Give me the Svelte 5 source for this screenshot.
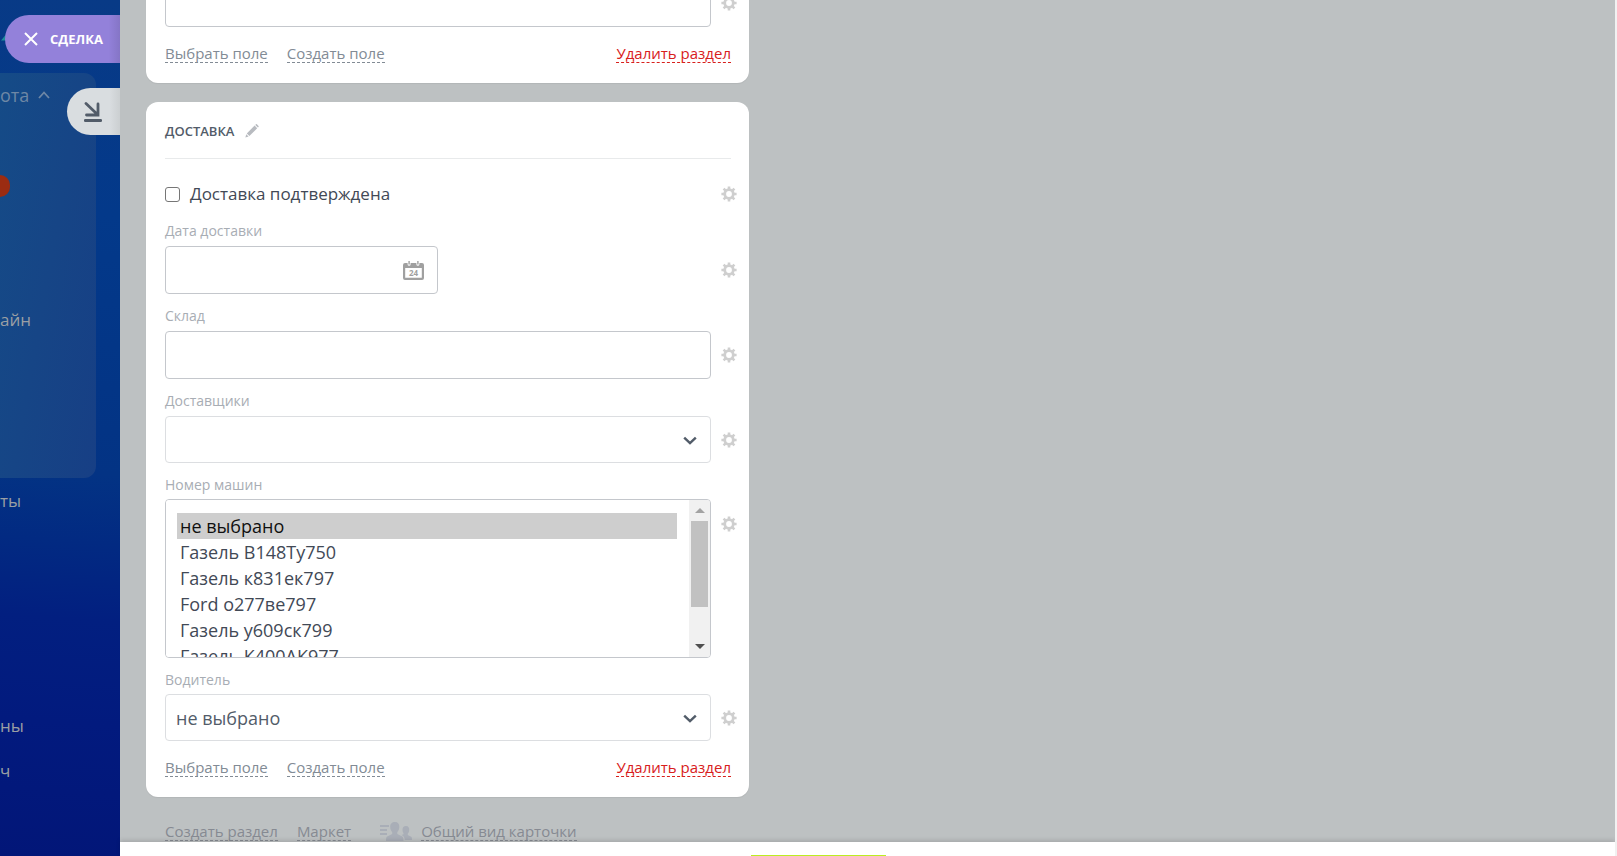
<script lang="ts">
	const trucks = [
		'не выбрано',
		'Газель В148Ту750',
		'Газель к831ек797',
		'Ford о277ве797',
		'Газель у609ск799',
		'Газель К400АК977',
		'Газель',
		'Ford',
		'Газель'
	];

	let lastField = $state('');
	let confirmed = $state(false);
	let date = $state('');
	let stock = $state('');
	let courier = $state('');
	let truck = $state(['не выбрано']);
	let driver = $state('не выбрано');
	let listEl: HTMLElement;

	function scrollList(delta: number) {
		listEl.scrollTop += delta;
	}
</script>

{#snippet gear()}
	<button class="gear" aria-label="Настройки поля">
		<svg width="16" height="16" viewBox="0 0 16 16">
			<circle cx="8" cy="8" r="4.3" fill="none" stroke="#cfcfcf" stroke-width="2.8" />
			<g stroke="#cfcfcf" stroke-width="2.6">
				<path d="M8 .4v2.8M8 12.8v2.8M.4 8h2.8M12.8 8h2.8" />
				<path d="M2.6 2.6l2 2M11.4 11.4l2 2M2.6 13.4l2-2M11.4 4.6l2-2" />
			</g>
		</svg>
	</button>
{/snippet}

{#snippet chevron()}
	<svg class="chevron" width="14" height="10" viewBox="0 0 14 10">
		<path d="M1.2 1.6 7 7.2l5.8-5.6" fill="none" stroke="#525c69" stroke-width="2.4" />
	</svg>
{/snippet}

{#snippet sectionLinks()}
	<div class="links">
		<a href="#select">Выбрать поле</a>
		<a href="#create">Создать поле</a>
		<a class="remove" href="#remove">Удалить раздел</a>
	</div>
{/snippet}

<div class="layout">
	<aside class="sidebar">
		<svg class="logo" width="8" height="12" viewBox="0 0 8 12">
			<path d="M1 9.5 8 1v8.5z" fill="#1d8f9b" />
		</svg>
		<nav class="menu">
			<div class="group">
				<a class="group-title" href="#work">
					ота
					<svg width="12" height="8" viewBox="0 0 12 8">
						<path d="M1 7l5-5.5L11 7" fill="none" stroke="currentColor" stroke-width="1.8" />
					</svg>
				</a>
				<span class="counter"></span>
				<a class="online" href="#online">айн</a>
			</div>
			<a class="item" href="#item-1">ты</a>
			<a class="item second" href="#item-2">ны</a>
			<a class="item third" href="#item-3">ч</a>
		</nav>
		<button class="tab deal">
			<svg width="14" height="14" viewBox="0 0 14 14">
				<path d="M1 1l12 12M13 1L1 13" stroke="#fff" stroke-width="2" />
			</svg>
			СДЕЛКА
		</button>
		<button class="tab minimize" aria-label="Свернуть">
			<svg width="18" height="20" viewBox="0 0 18 20">
				<path
					d="M2 1.5l11.5 11M14 2v11H2.5M1.3 18.5h15.4"
					fill="none"
					stroke="#525c69"
					stroke-width="2.8"
					stroke-linecap="round"
				/>
			</svg>
		</button>
	</aside>

	<main class="panel">
		<section class="card previous">
			<div class="row">
				<input class="control" type="text" aria-label="Поле" bind:value={lastField} />
				{@render gear()}
			</div>
			{@render sectionLinks()}
		</section>

		<section class="card">
			<header class="card-header">
				<h2>ДОСТАВКА</h2>
				<button class="edit" aria-label="Переименовать">
					<svg width="14" height="14" viewBox="0 0 14 14">
						<path d="M1.8 9.4 9.6 1.6l2.6 2.6L4.4 12zM10.3.9l.6-.6q.5-.4 1 0l1.6 1.6q.4.5 0 1l-.6.6zM1.2 10.2l2.4 2.4L.4 13.4z" fill="#b8bbc0" />
					</svg>
				</button>
			</header>

			<div class="row check-row">
				<label class="check">
					<input type="checkbox" bind:checked={confirmed} />
					Доставка подтверждена
				</label>
				{@render gear()}
			</div>

			<label class="label" for="date">Дата доставки</label>
			<div class="row">
				<div class="wrap date">
					<input class="control" id="date" type="text" bind:value={date} />
					<svg class="calendar" width="21" height="19" viewBox="0 0 21 19">
						<path d="M2 2h2.6v1.2a1.5 1.5 0 0 0 3 0V2h5.8v1.2a1.5 1.5 0 0 0 3 0V2H19a2 2 0 0 1 2 2v13a2 2 0 0 1-2 2H2a2 2 0 0 1-2-2V4a2 2 0 0 1 2-2zm.2 5v9.8h16.6V7z" fill="#a0a0a0" fill-rule="evenodd" />
						<path d="M6.1 0v3.4M14.9 0v3.4" stroke="#a0a0a0" stroke-width="1.4" />
						<text x="10.5" y="15" text-anchor="middle" font-size="8" font-weight="700" fill="#a0a0a0">24</text>
					</svg>
				</div>
				{@render gear()}
			</div>

			<label class="label" for="stock">Склад</label>
			<div class="row">
				<input class="control" id="stock" type="text" bind:value={stock} />
				{@render gear()}
			</div>

			<label class="label" for="courier">Доставщики</label>
			<div class="row">
				<div class="wrap">
					<select class="control drop" id="courier" bind:value={courier}>
						<option value=""></option>
					</select>
					{@render chevron()}
				</div>
				{@render gear()}
			</div>

			<label class="label tight" for="truck">Номер машин</label>
			<div class="row top">
				<div class="listbox">
					<select id="truck" multiple bind:this={listEl} bind:value={truck}>
						{#each trucks as name, i (i)}
							<option value={name}>{name}</option>
						{/each}
					</select>
					<div class="scroll">
						<button aria-label="Вверх" onclick={() => scrollList(-26)}>
							<svg width="10" height="5" viewBox="0 0 10 5"><path d="M0 5l5-5 5 5z" fill="#a3a3a3" /></svg>
						</button>
						<div class="thumb"></div>
						<button aria-label="Вниз" onclick={() => scrollList(26)}>
							<svg width="10" height="5" viewBox="0 0 10 5"><path d="M0 0l5 5 5-5z" fill="#505050" /></svg>
						</button>
					</div>
				</div>
				{@render gear()}
			</div>

			<label class="label tight" for="driver">Водитель</label>
			<div class="row">
				<div class="wrap">
					<select class="control drop" id="driver" bind:value={driver}>
						<option>не выбрано</option>
					</select>
					{@render chevron()}
				</div>
				{@render gear()}
			</div>

			{@render sectionLinks()}
		</section>

		<div class="links page-links">
			<a href="#section">Создать раздел</a>
			<a href="#market">Маркет</a>
			<span class="view">
				<svg width="32" height="20" viewBox="0 0 32 20" fill="#a9aeb7">
					<path d="M0 3h9v2H0zM0 7h7v2H0zM0 11h7v2H0z" />
					<path d="M15 0c3 0 4.5 2 4.3 5-.1 2.5-1 4-2 5v2l5 2.5c1 .6 1.2 2 1.2 4.5H6c0-2.5.2-4 1.2-4.5l5-2.5v-2c-1-1-2-2.5-2-5C10 2 12 0 15 0z" />
					<path d="M26 4c2.4 0 3.4 1.8 3.2 4-.1 1.8-.7 2.9-1.4 3.6v1.5l3.4 1.7c.7.5.8 1.7.8 3.2h-7.3c0-2-.6-3.3-2-4.2l-1.2-.7 2-.8v-1c-.7-.8-1-1.900-1-3.300C22.500 5.500 23.500 4 26 4z" />
				</svg>
				<a href="#view">Общий вид карточки</a>
			</span>
		</div>
	</main>

	<footer class="toolbar">
		<button class="save" aria-label="Сохранить"></button>
	</footer>
</div>

<style>
	:global(body) {
		overflow: hidden;
	}

	.layout {
		display: grid;
		grid-template-columns: 120px 1fr;
		grid-template-rows: minmax(0, 1fr) 14px;
		height: 100vh;
		overflow: hidden;
		box-sizing: border-box;
		border-right: 2px solid #f1f1f1;
		font-family: 'Open Sans', 'Noto Sans', sans-serif;
		font-size: 16px;
	}

	.layout * {
		box-sizing: border-box;
	}

	button {
		padding: 0;
		border: 0;
		background: none;
		font-family: inherit;
		cursor: pointer;
	}

	svg {
		display: block;
		flex: none;
	}

	.sidebar {
		grid-row: 1 / 3;
		position: relative;
		overflow: hidden;
		background: linear-gradient(184deg, #083a86 0%, #03398a 25%, #033384 55%, #022a82 63%, #021f80 72%, #021a7e 84%, #021678 100%);
	}

	.logo {
		position: absolute;
		top: 31px;
		left: 0;
	}

	.menu {
		display: flex;
		flex-direction: column;
		padding-top: 73px;
		font-size: 17px;
		line-height: 24px;
	}

	.menu a {
		color: #9a9fa4;
		text-decoration: none;
	}

	.group {
		display: flex;
		flex-direction: column;
		align-items: flex-start;
		width: 96px;
		height: 405px;
		padding-top: 10px;
		border-radius: 0 12px 12px 0;
		background: linear-gradient(100deg, #154b87, #173f85);
	}

	.group .group-title {
		display: flex;
		align-items: center;
		gap: 9px;
		color: #6e87a5;
		font-size: 18px;
	}

	.counter {
		width: 10px;
		height: 22px;
		margin-top: 68px;
		border-radius: 0 11px 11px 0;
		background: #9b2c12;
	}

	.online {
		margin-top: 111px;
	}

	.item {
		margin-top: 11px;
	}

	.item.second {
		margin-top: 201px;
	}

	.item.third {
		margin-top: 21px;
	}

	/* slider tabs float over the menu */
	.tab {
		position: absolute;
		right: 0;
		display: flex;
		align-items: center;
	}

	.deal {
		top: 15px;
		width: 115px;
		height: 48px;
		padding-left: 19px;
		gap: 12px;
		border-radius: 24px 0 0 24px;
		background: linear-gradient(90deg, #9381da 90%, #8575c6);
		color: #fff;
		font-size: 13px;
		font-weight: 700;
	}

	.minimize {
		top: 88px;
		width: 53px;
		height: 47px;
		padding-left: 17px;
		border-radius: 24px 0 0 24px;
		background: linear-gradient(90deg, #d9dde0 80%, #cbcfd1);
	}

	.panel {
		overflow: hidden;
		padding: 0 26px;
		background: #bdc1c2;
	}

	.card {
		width: 603px;
		max-width: 100%;
		margin-bottom: 19px;
		padding: 0 18px 20px 19px;
		border-radius: 12px;
		background: #fff;
		box-shadow: 0 1px 1px rgba(0, 0, 0, 0.06);
	}

	.card.previous {
		margin-top: -21px;
	}

	.card-header {
		display: flex;
		align-items: center;
		gap: 11px;
		height: 57px;
		margin-bottom: 21px;
		padding-top: 2px;
		border-bottom: 1px solid #e8eaeb;
	}

	h2 {
		margin: 0;
		color: #525c69;
		font-size: 13px;
		font-weight: 600;
	}

	.row {
		display: flex;
		align-items: center;
		justify-content: space-between;
		gap: 10px;
		margin-right: -6px;
	}

	.row.top {
		align-items: flex-start;
	}

	.row.top .gear {
		margin-top: 17px;
	}

	.check-row {
		height: 28px;
		margin-bottom: 1px;
	}

	.gear {
		flex: none;
		width: 16px;
		height: 16px;
	}

	.check {
		display: flex;
		align-items: center;
		gap: 10px;
		color: #424956;
		font-size: 17px;
		line-height: 24px;
	}

	.check input {
		appearance: none;
		width: 15px;
		height: 15px;
		margin: 0;
		border: 1px solid #767676;
		border-radius: 3px;
		background: #fff;
	}

	.check input:checked {
		background: #525c69;
	}

	.label {
		display: block;
		height: 37px;
		padding-top: 12px;
		color: #a8adb4;
		font-size: 14px;
		line-height: 20px;
	}

	.label.tight {
		height: 36px;
	}

	.control {
		display: block;
		width: 100%;
		height: 48px;
		margin: 0;
		padding: 0 10px;
		border: 1px solid #c4c7cc;
		border-radius: 4px;
		background: #fff;
		color: #525c69;
		font-family: inherit;
		font-size: 18px;
	}

	.drop {
		appearance: none;
		height: 47px;
		border-color: #dcdee1;
	}

	.wrap {
		position: relative;
		flex: 1;
	}

	.wrap.date {
		flex: none;
		width: 50%;
		max-width: 273px;
	}

	.chevron,
	.calendar {
		position: absolute;
		pointer-events: none;
	}

	.chevron {
		top: 20px;
		right: 14px;
	}

	.calendar {
		top: 15px;
		right: 14px;
	}

	.listbox {
		display: flex;
		flex: 1;
		height: 159px;
		overflow: hidden;
		border: 1px solid #c4c7cc;
		border-radius: 4px;
	}

	.listbox select {
		flex: 1;
		height: 100%;
		padding: 13px 12px 0 11px;
		border: 0;
		outline: 0;
		background: #fff;
		color: #424956;
		font-family: inherit;
		font-size: 18px;
		scrollbar-width: none;
	}

	.listbox option {
		height: 26px;
		min-height: 26px;
		padding: 1px 3px 0;
		line-height: 26px;
	}

	.listbox option:checked {
		background: #cecece;
		color: #101010;
	}

	.scroll {
		display: flex;
		flex-direction: column;
		align-items: center;
		width: 21px;
		background: #f1f1f1;
	}

	.scroll button {
		display: grid;
		place-items: center;
		width: 100%;
		height: 21px;
	}

	.scroll button:last-child {
		margin-top: auto;
	}

	.thumb {
		width: 17px;
		height: 86px;
		background: #c1c1c1;
	}

	.links {
		display: flex;
		gap: 19px;
		margin-top: 17px;
		font-size: 15px;
		line-height: 18px;
	}

	.links a {
		border-bottom: 1px dashed currentColor;
		color: #828b95;
		text-decoration: none;
	}

	.links .remove {
		margin-left: auto;
		color: #d8201c;
	}

	.page-links {
		height: 19px;
		margin: 25px 0 0 19px;
	}

	.page-links a {
		color: #868a92;
	}

	.view {
		display: flex;
		gap: 9px;
		margin-left: 10px;
	}

	.toolbar {
		position: relative;
		display: flex;
		justify-content: center;
		align-items: flex-end;
		padding-right: 98px;
		background: #fff;
		box-shadow: 0 -2px 4px rgba(0, 0, 0, 0.12);
	}

	.save {
		width: 135px;
		height: 1px;
		background: #bbed21;
	}
</style>
